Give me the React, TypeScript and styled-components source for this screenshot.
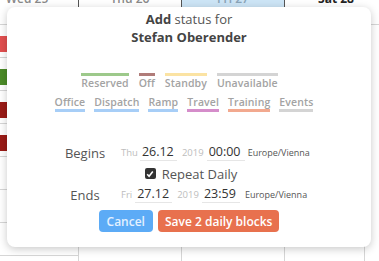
import React from 'react';
import styled, { createGlobalStyle } from 'styled-components';

const GlobalStyle = createGlobalStyle`
  html, body {
    margin: 0;
    padding: 0;
    background: #fff;
  }
  body {
    font-family: "Open Sans", "Liberation Sans", sans-serif;
  }
`;

const Page = styled.div`
  position: relative;
  width: 379px;
  height: 261px;
  overflow: hidden;
  background: #fff;
`;

/* background calendar */

const Calendar = styled.div`
  margin-top: -11px;
  margin-left: -24px;
  display: flex;
  flex-direction: column;
`;

const HeaderRow = styled.div`
  display: flex;
  height: 36px;
  border-bottom: 1px solid #d6d6d6;
  box-sizing: border-box;
`;

const HeaderCell = styled.div<{ $tone: 'muted' | 'today' | 'strong'; $w: number }>`
  width: ${(p) => p.$w}px;
  flex: none;
  box-sizing: border-box;
  border-right: 1px solid #555;
  text-align: center;
  font-size: 12px;
  line-height: 16px;
  padding-top: 2px;
  font-weight: ${(p) => (p.$tone === 'strong' ? 700 : 600)};
  color: ${(p) => (p.$tone === 'strong' ? '#222' : p.$tone === 'today' ? '#8aa4b8' : '#8a8a8a')};
  background: ${(p) => (p.$tone === 'today' ? '#cde5f6' : 'transparent')};
`;

const Body = styled.div`
  display: flex;
  height: 240px;
`;

const Column = styled.div<{ $w: number }>`
  width: ${(p) => p.$w}px;
  flex: none;
  box-sizing: border-box;
  border-right: 1px solid #d6d6d6;
  display: flex;
  flex-direction: column;
`;

const Slot = styled.div`
  height: 33px;
  flex: none;
  box-sizing: border-box;
  border-bottom: 1px solid #d6d6d6;
  padding-top: 11px;
`;

const Block = styled.div<{ $color: string }>`
  height: 16px;
  background: ${(p) => p.$color};
`;

/* modal */

const Modal = styled.div`
  position: absolute;
  left: 7px;
  top: 7px;
  width: 364px;
  height: 240px;
  box-sizing: border-box;
  background: #fff;
  border-radius: 8px;
  box-shadow: 0 2px 8px rgba(0, 0, 0, 0.22);
  display: flex;
  flex-direction: column;
  align-items: center;
  padding-top: 3px;
  color: #444;
`;

const Title = styled.div`
  font-size: 13px;
  line-height: 18px;
  color: #555;
  b {
    color: #444;
  }
`;

const Name = styled.div`
  font-size: 13px;
  line-height: 18px;
  font-weight: 700;
  color: #444;
`;

const LegendRow = styled.div<{ $top: number; $shift: number; $gap: number }>`
  display: flex;
  gap: ${(p) => p.$gap}px;
  margin-top: ${(p) => p.$top}px;
  margin-right: ${(p) => p.$shift}px;
`;

const LegendItem = styled.div<{ $color: string; $under?: boolean }>`
  font-size: 10.5px;
  line-height: 13px;
  font-weight: 600;
  letter-spacing: 0.1px;
  color: #a3a3a3;
  ${(p) =>
    p.$under
      ? `border-bottom: 3px solid ${p.$color};`
      : `border-top: 3px solid ${p.$color}; padding-top: 1px;`}
`;

const Times = styled.div`
  margin-top: 30px;
  align-self: stretch;
  display: flex;
  flex-direction: column;
`;

const TimeRow = styled.div`
  display: grid;
  grid-template-columns: 50px auto;
  column-gap: 11px;
  align-items: center;
  height: 21px;
  padding-left: 53px;
`;

const Label = styled.div`
  font-size: 13px;
  color: #555;
  text-align: center;
`;

const Fields = styled.div`
  display: flex;
  align-items: center;
`;

const Small = styled.span<{ $gap?: number }>`
  font-size: 9.5px;
  color: #bdbdbd;
  margin-left: ${(p) => p.$gap ?? 0}px;
`;

const Field = styled.span<{ $w: number; $gap: number }>`
  width: ${(p) => p.$w}px;
  margin-left: ${(p) => p.$gap}px;
  box-sizing: border-box;
  padding-left: 2px;
  font-size: 12.5px;
  line-height: 16px;
  color: #333;
  border-bottom: 1px solid #e6e6e6;
`;

const Zone = styled.span<{ $gap: number }>`
  margin-left: ${(p) => p.$gap}px;
  font-size: 9px;
  color: #555;
`;

const RepeatRow = styled.label`
  display: flex;
  align-items: center;
  justify-content: center;
  gap: 6px;
  height: 21px;
  padding-left: 4px;
  font-size: 13px;
  color: #555;
`;

const Check = styled.span`
  width: 11px;
  height: 11px;
  border-radius: 2px;
  background: #333;
  display: flex;
  align-items: center;
  justify-content: center;
`;

const Actions = styled.div`
  display: flex;
  gap: 5px;
  margin-top: 5px;
`;

const Button = styled.button<{ $kind: 'cancel' | 'save' }>`
  height: 22px;
  border: none;
  border-radius: 4px;
  padding: 0 ${(p) => (p.$kind === 'cancel' ? 8 : 7)}px;
  font-family: "Open Sans", "Liberation Sans", sans-serif;
  font-size: 12px;
  font-weight: 600;
  color: ${(p) => (p.$kind === 'cancel' ? '#e4f1ff' : '#fff')};
  background: ${(p) => (p.$kind === 'cancel' ? '#5cabf6' : '#e8714e')};
  cursor: pointer;
`;

const statuses = [
  { name: 'Reserved', color: '#9dc98b' },
  { name: 'Off', color: '#b07c79' },
  { name: 'Standby', color: '#fbe3a3' },
  { name: 'Unavailable', color: '#d4d4d4' },
];

const duties = [
  { name: 'Office', color: '#a7cef7' },
  { name: 'Dispatch', color: '#a7cef7' },
  { name: 'Ramp', color: '#a7cef7' },
  { name: 'Travel', color: '#d58dca' },
  { name: 'Training', color: '#f2a98f' },
  { name: 'Events', color: '#d4d4d4' },
];

const days: { label: string; tone: 'muted' | 'today' | 'strong'; w: number }[] = [
  { label: 'Wed 25', tone: 'muted', w: 103 },
  { label: 'Thu 26', tone: 'muted', w: 103 },
  { label: 'Fri 27', tone: 'today', w: 103 },
  { label: 'Sat 28', tone: 'strong', w: 103 },
  { label: 'Sun 29', tone: 'muted', w: 103 },
];

const blocks = ['#e24f4f', '#4b8b27', '#9b1b16', '#9b1b16', '', '', ''];

export default function App() {
  return (
    <Page>
      <GlobalStyle />
      <Calendar>
        <HeaderRow>
          {days.map((d) => (
            <HeaderCell key={d.label} $tone={d.tone} $w={d.w}>
              {d.label}
            </HeaderCell>
          ))}
        </HeaderRow>
        <Body>
          <Column $w={103}>
            {blocks.map((c, i) => (
              <Slot key={i}>{c && <Block $color={c} />}</Slot>
            ))}
          </Column>
          <Column $w={103} />
          <Column $w={103} />
          <Column $w={80} />
        </Body>
      </Calendar>

      <Modal>
        <Title>
          <b>Add</b> status for
        </Title>
        <Name>Stefan Oberender</Name>

        <LegendRow $top={27} $shift={19} $gap={10}>
          {statuses.map((s) => (
            <LegendItem key={s.name} $color={s.color}>
              {s.name}
            </LegendItem>
          ))}
        </LegendRow>
        <LegendRow $top={6} $shift={10} $gap={9}>
          {duties.map((s) => (
            <LegendItem key={s.name} $color={s.color} $under>
              {s.name}
            </LegendItem>
          ))}
        </LegendRow>

        <Times>
          <TimeRow>
            <Label>Begins</Label>
            <Fields>
              <Small>Thu</Small>
              <Field $w={37} $gap={2}>26.12</Field>
              <Small $gap={5}>2019</Small>
              <Field $w={38} $gap={3}>00:00</Field>
              <Zone $gap={3}>Europe/Vienna</Zone>
            </Fields>
          </TimeRow>
          <RepeatRow>
            <Check>
              <svg width="8" height="8" viewBox="0 0 8 8">
                <path d="M1.2 4.2 L3.1 6.2 L6.8 1.6" fill="none" stroke="#fff" strokeWidth="1.6" />
              </svg>
            </Check>
            Repeat Daily
          </RepeatRow>
          <TimeRow>
            <Label>Ends</Label>
            <Fields>
              <Small>Fri</Small>
              <Field $w={37} $gap={3}>27.12</Field>
              <Small $gap={5}>2019</Small>
              <Field $w={38} $gap={3}>23:59</Field>
              <Zone $gap={5}>Europe/Vienna</Zone>
            </Fields>
          </TimeRow>
        </Times>

        <Actions>
          <Button $kind="cancel">Cancel</Button>
          <Button $kind="save">Save 2 daily blocks</Button>
        </Actions>
      </Modal>
    </Page>
  );
}
